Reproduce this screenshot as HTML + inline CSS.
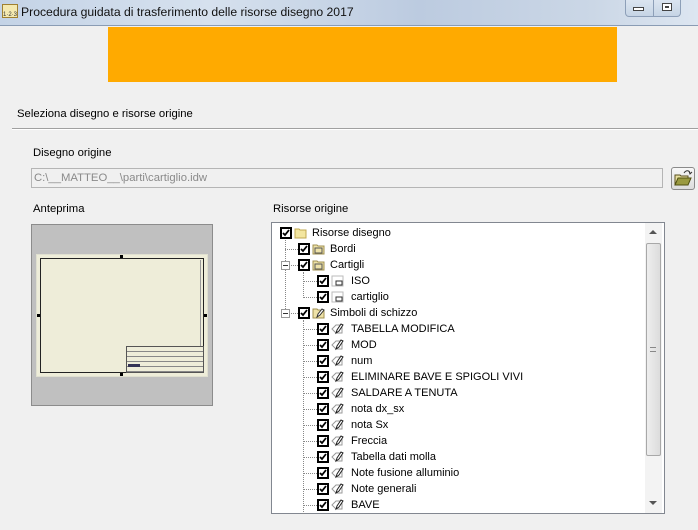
<!DOCTYPE html>
<html><head><meta charset="utf-8">
<style>
*{margin:0;padding:0;box-sizing:border-box}
body{width:698px;height:530px;background:#f0f0f0;font-family:"Liberation Sans",sans-serif;font-size:11.3px;color:#000;position:relative;overflow:hidden}
.a{position:absolute}
.title{left:0;top:0;width:698px;height:26px;background:linear-gradient(90deg,#c4d3e6 0%,#d6e1ee 30%,#bccbe0 60%,#cbd7e6 85%,#dde6f1 100%);border-bottom:1px solid #8a9cb4}
.cb{position:absolute;width:12px;height:12px;border:2px solid #000;background:#fff}
.t{position:absolute;font-size:11px;line-height:16px;white-space:nowrap}
.dh{position:absolute;height:0;border-top:1px dotted #888}
.dv{position:absolute;width:0;border-left:1px dotted #888}
.ex{position:absolute;width:9px;height:9px;border:1px solid #999;background:#fff}
.ex::after{content:"";position:absolute;left:1px;top:3px;width:5px;height:1px;background:#333}
</style></head><body>
<div class="a title"></div>
<div class="a" style="left:2px;top:4px;width:16px;height:14px;background:#f4e9b0;border:1px solid #a08030;font-size:6px;line-height:20px;text-align:center;color:#333">1·2·3</div>
<div class="a" style="left:21px;top:5px;font-size:12.2px;color:#111">Procedura guidata di trasferimento delle risorse disegno 2017</div>
<div class="a" style="left:625px;top:0;width:56px;height:17px;border:1px solid #8d9fb8;border-top:none;border-radius:0 0 4px 4px;background:linear-gradient(#dbe5f0,#c6d4e5)"></div>
<div class="a" style="left:653px;top:0;width:1px;height:17px;background:#8d9fb8"></div>
<div class="a" style="left:633px;top:7px;width:11px;height:4px;border:1px solid #444;background:#fff"></div>
<div class="a" style="left:662px;top:3px;width:10px;height:8px;border:1px solid #444;background:#fff"><div style="margin:2px;width:4px;height:2px;border:1px solid #444"></div></div>

<div class="a" style="left:108px;top:27px;width:509px;height:55px;background:#ffaa00"></div>

<div class="a" style="left:17px;top:108px">Seleziona disegno e risorse origine</div>
<div class="a" style="left:12px;top:128px;width:686px;height:1px;background:#a0a0a0"></div>
<div class="a" style="left:12px;top:129px;width:686px;height:1px;background:#fff"></div>

<div class="a" style="left:33px;top:147px">Disegno origine</div>
<div class="a" style="left:31px;top:168px;width:632px;height:20px;border:1px solid #b5b5b5;background:#f0f0f0;color:#8a8a8a;padding:3px 2px;font-size:11.3px">C:\__MATTEO__\parti\cartiglio.idw</div>
<div class="a" style="left:671px;top:167px;width:24px;height:23px;border:1px solid #8a8a8a;border-radius:3px;background:linear-gradient(#f8f8f8,#dcdcdc)">
<svg width="22" height="21" viewBox="0 0 22 21"><path d="M3 7h5l1 1h7v9H3z" fill="#e8e0a0" stroke="#5a5020"/><path d="M3 17l3-7h13l-3 7z" fill="#9a9a40" stroke="#505010"/><path d="M12 5c2-3 5-3 6 0" fill="none" stroke="#333"/><path d="M17 3l1 3 2-2" fill="none" stroke="#333"/></svg></div>

<div class="a" style="left:33px;top:203px">Anteprima</div>
<div class="a" style="left:31px;top:224px;width:182px;height:182px;border:1px solid #8c8c8c;background:#c0c0c0"></div>
<div class="a" style="left:36px;top:254px;width:172px;height:123px;background:#eeedd9;border:1px solid #e0e0d0"></div>
<div class="a" style="left:40px;top:258px;width:164px;height:115px;border:1px solid #222"></div>
<div class="a" style="left:200px;top:260px;width:1px;height:88px;background:#999"></div>
<div class="a" style="left:126px;top:346px;width:78px;height:27px;border:1px solid #555;background:repeating-linear-gradient(#eeedd9 0 4px,#888 4px 5px)"></div>
<div class="a" style="left:128px;top:364px;width:12px;height:3px;background:#335"></div>
<div class="a" style="left:120px;top:255px;width:3px;height:3px;background:#000"></div>
<div class="a" style="left:120px;top:373px;width:3px;height:3px;background:#000"></div>
<div class="a" style="left:37px;top:314px;width:3px;height:3px;background:#000"></div>
<div class="a" style="left:204px;top:314px;width:3px;height:3px;background:#000"></div>

<div class="a" style="left:273px;top:203px">Risorse origine</div>
<div class="a" style="left:271px;top:222px;width:394px;height:292px;border:1px solid #828790;background:#fff;overflow:hidden">
 <div class="a" style="left:373px;top:0;width:17px;height:290px;background:#f3f3f3"></div>
 <div class="a" style="left:377px;top:7px;width:0;height:0;border:4px solid transparent;border-bottom:4px solid #555;border-top:none"></div>
 <div class="a" style="left:374px;top:20px;width:15px;height:213px;border:1px solid #a8a8a8;border-radius:2px;background:linear-gradient(90deg,#eee,#dcdcdc)"></div>
 <div class="a" style="left:378px;top:124px;width:6px;height:5px;border-top:1px solid #888;border-bottom:1px solid #888"></div>
 <div class="a" style="left:377px;top:278px;width:0;height:0;border:4px solid transparent;border-top:4px solid #555;border-bottom:none"></div>
</div>

<div id="tree"></div>
<script>
var rows=[[0,"Risorse disegno","f"],[1,"Bordi","b"],[1,"Cartigli","b",1],[2,"ISO","c"],[2,"cartiglio","c"],[1,"Simboli di schizzo","s",1],
[2,"TABELLA MODIFICA","p"],[2,"MOD","p"],[2,"num","p"],[2,"ELIMINARE BAVE E SPIGOLI VIVI","p"],[2,"SALDARE A TENUTA","p"],[2,"nota dx_sx","p"],[2,"nota Sx","p"],[2,"Freccia","p"],[2,"Tabella dati molla","p"],[2,"Note fusione alluminio","p"],[2,"Note generali","p"],[2,"BAVE","p"]];
var h="",cbx=[280,298,317];
h+='<div class="dv" style="left:285px;top:240px;height:73px"></div>';
h+='<div class="dv" style="left:303px;top:272px;height:26px"></div>';
h+='<div class="dv" style="left:303px;top:320px;height:194px"></div>';
rows.forEach(function(r,i){
 var y=227+i*16,l=r[0],x=cbx[l];
 if(l>0){h+='<div class="dh" style="left:'+(l==1?285:303)+'px;top:'+(y+6)+'px;width:'+(x-(l==1?285:303))+'px"></div>';}
 if(r[3])h+='<div class="ex" style="left:281px;top:'+(y+2)+'px"></div>';
 h+='<svg class="a" style="left:'+x+'px;top:'+y+'px" width="12" height="12"><rect x="1" y="1" width="10" height="10" fill="#fff" stroke="#000" stroke-width="2"/><path d="M3 6l2 2 4-5" fill="none" stroke="#000" stroke-width="1.8"/></svg>';
 var ix=x+14,ic="";
 if(r[2]=="f")ic='<path d="M1 3h4l1 1h6v8H1z" fill="#f3e6a0" stroke="#c0a850"/>';
 else if(r[2]=="b")ic='<path d="M1 3h4l1 1h6v8H1z" fill="#eee2a8" stroke="#a09050"/><rect x="3" y="6" width="7" height="5" fill="none" stroke="#555"/>';
 else if(r[2]=="c")ic='<rect x="1" y="2" width="11" height="10" fill="#fff" stroke="#bbb"/><rect x="5" y="7" width="6" height="4" fill="#fff" stroke="#333"/>';
 else if(r[2]=="s")ic='<path d="M1 3h4l1 1h6v8H1z" fill="#eee2a8" stroke="#a09050"/><path d="M5 11l1-3 4-5 2 1-4 5z" fill="#fff" stroke="#333"/>';
 else ic='<path d="M1 7l4-4 6 0 0 8-6 0z" fill="#fff" stroke="#999"/><path d="M5 11l1-3 4-6 2 1-4 6z" fill="#fff" stroke="#222"/>';
 h+='<svg class="a" style="left:'+ix+'px;top:'+(y-1)+'px" width="14" height="14">'+ic+'</svg>';
 h+='<div class="t" style="left:'+(ix+(l==2?20:18))+'px;top:'+(y-2)+'px">'+r[1]+'</div>';
});
document.getElementById("tree").innerHTML=h;
</script>
</body></html>
